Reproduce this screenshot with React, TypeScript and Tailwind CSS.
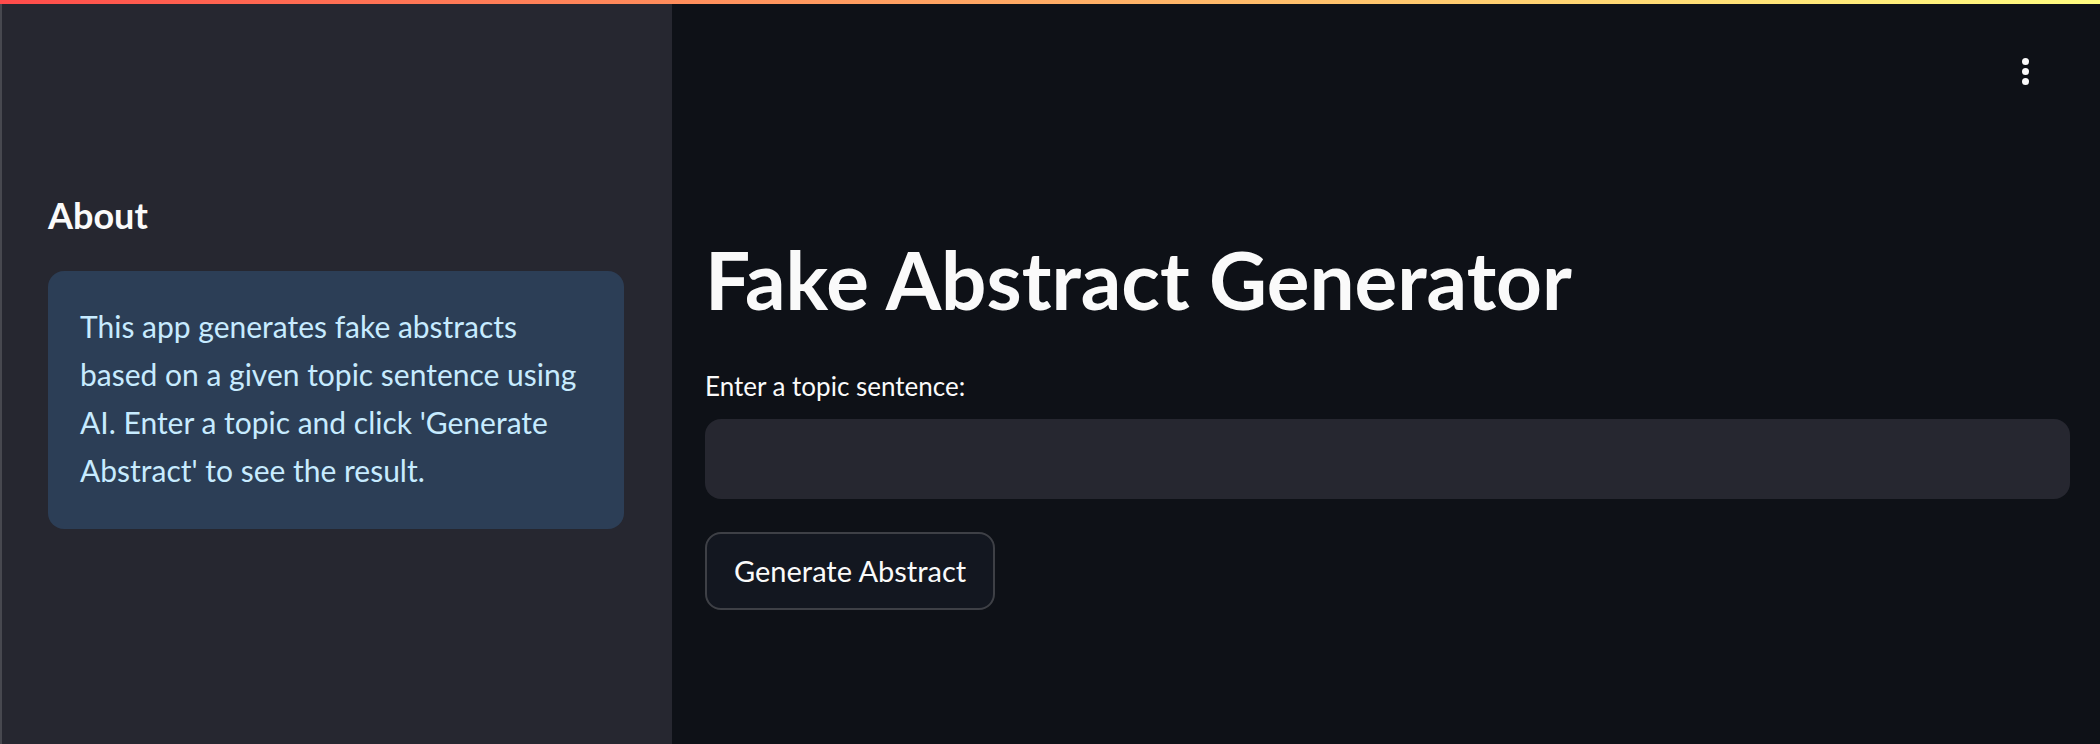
export default function App() {
  return (
    <div className="h-screen flex flex-col bg-[#0e1117] text-[#fafafa] font-['Lato',sans-serif] overflow-hidden">
      <div className="h-1 shrink-0 bg-gradient-to-r from-[#ff4b4b] to-[#fffd80]" />
      <div className="flex flex-1 min-h-0">
        <aside className="w-[672px] shrink-0 bg-[#262730] border-l-2 border-[#47484f] pl-[46px] pr-[48px] pt-[190px]">
          <h2 className="text-[36px] leading-[1.2] font-bold">About</h2>
          <div className="mt-[34px] rounded-[16px] bg-[#2c3e56] px-[32px] pt-[31px] pb-[35px] text-[#c7ebff] text-[30px] leading-[48px]">
            This app generates fake abstracts based on a given topic sentence using AI. Enter a topic and click 'Generate Abstract' to see the result.
          </div>
        </aside>
        <main className="relative flex-1 pl-[33px] pr-[30px] pt-[227px]">
          <button className="absolute top-[50px] right-[67px] flex flex-col gap-[3px] p-1">
            <span className="w-[7px] h-[7px] rounded-full bg-[#fafafa]" />
            <span className="w-[7px] h-[7px] rounded-full bg-[#fafafa]" />
            <span className="w-[7px] h-[7px] rounded-full bg-[#fafafa]" />
          </button>
          <h1 className="text-[80px] leading-[1.2] font-bold">Fake Abstract Generator</h1>
          <label className="block mt-[40px] text-[26px] leading-[1.5]">Enter a topic sentence:</label>
          <input className="mt-[13px] w-full h-[80px] rounded-[16px] bg-[#262730] px-6 text-[30px] outline-none" />
          <button className="mt-[33px] h-[78px] px-[27px] rounded-[16px] border-2 border-[#3e4046] bg-[#131720] text-[29px]">
            Generate Abstract
          </button>
        </main>
      </div>
    </div>
  );
}
